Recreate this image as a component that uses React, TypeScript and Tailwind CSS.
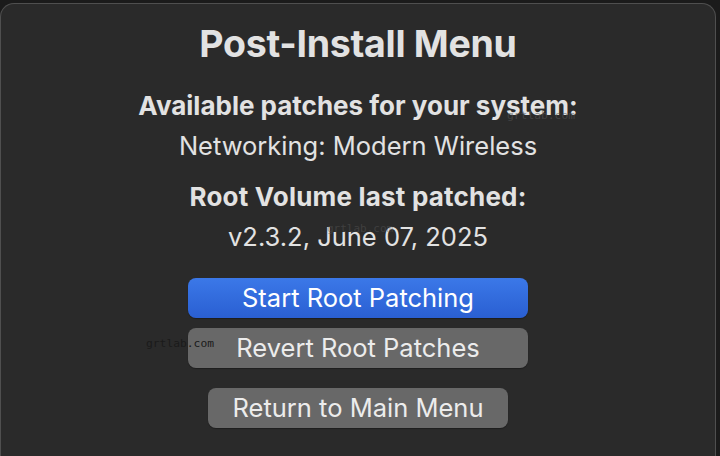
const font = { fontFamily: "Inter, 'Noto Sans', sans-serif" };
const mono = { fontFamily: "'DejaVu Sans Mono', monospace" };

const PostInstallMenu = () => {
  return (
    <div className="w-[720px] h-[456px] bg-[#1b1b1b] pt-[3px] pr-[4px] overflow-hidden" style={font}>
      <div className="relative h-[460px] bg-[#2a2a2a] rounded-t-[14px] border border-b-0 border-[#4f4f4f] flex flex-col items-center text-[#e2e2e2]">
        <h1 className="mt-[18px] text-[37.5px] leading-[44px] font-bold tracking-[-0.3px]">
          Post-Install Menu
        </h1>
        <p className="mt-[24px] text-[26px] leading-[32px] font-bold">
          Available patches for your system:
        </p>
        <p className="mt-[8px] text-[25.5px] leading-[32px]">Networking: Modern Wireless</p>
        <p className="mt-[19px] text-[26px] leading-[32px] font-bold tracking-[0.2px]">
          Root Volume last patched:
        </p>
        <p className="mt-[8px] text-[25.5px] leading-[32px]">v2.3.2, June 07, 2025</p>

        <button className="mt-[25px] w-[340px] h-[40px] rounded-[8px] bg-gradient-to-b from-[#3b78e8] to-[#2a5fd2] text-white text-[25.5px] leading-[32px] shadow-[0_1px_1px_rgba(0,0,0,0.3)]">
          Start Root Patching
        </button>
        <button className="mt-[10px] w-[340px] h-[40px] rounded-[8px] bg-[#686868] text-[#ececec] text-[25.5px] leading-[32px] shadow-[0_1px_1px_rgba(0,0,0,0.3)]">
          Revert Root Patches
        </button>
        <button className="mt-[20px] w-[300px] h-[40px] rounded-[8px] bg-[#686868] text-[#ececec] text-[25.5px] leading-[32px] shadow-[0_1px_1px_rgba(0,0,0,0.3)]">
          Return to Main Menu
        </button>

        <span className="absolute left-[145px] top-[332px] text-[11.3px] text-[#1a1a1a]" style={mono}>
          grtlab.com
        </span>
        <span className="absolute left-[506px] top-[104px] text-[11.3px] text-[#555555]/60" style={mono}>
          grtlab.com
        </span>
        <span className="absolute left-[326px] top-[217px] text-[11px] text-[#555555]/50" style={mono}>
          grtlab.com
        </span>
      </div>
    </div>
  );
};

export default function App() {
  return <PostInstallMenu />;
}
